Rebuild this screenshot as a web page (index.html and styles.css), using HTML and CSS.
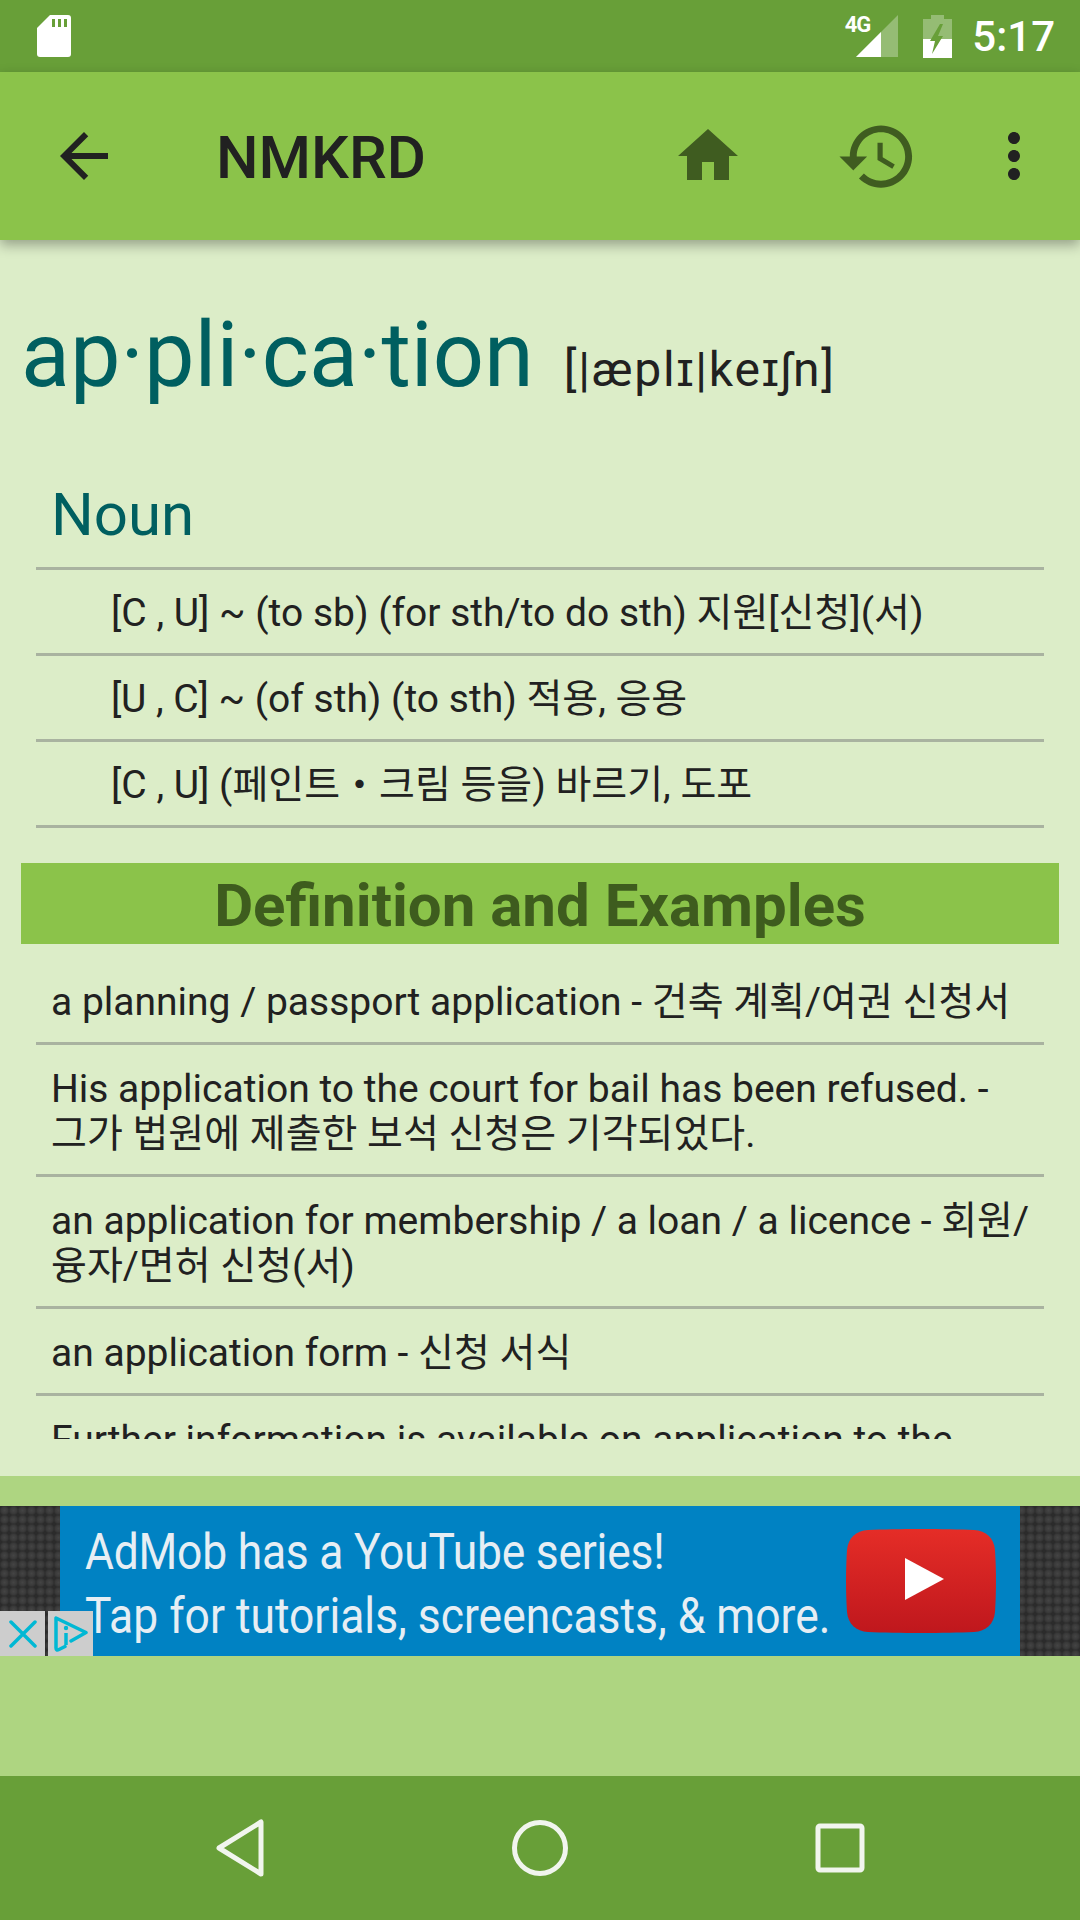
FILE: index.html
```html
<!DOCTYPE html>
<html lang="ko">
<head>
  <meta charset="UTF-8" />
  <meta name="viewport" content="width=device-width, initial-scale=1.0"/>
  <title>NMKRD</title>
  <link rel="stylesheet" href="styles.css">
</head>
<body>
  <div class="status-bar">
    <svg class="sd-icon" width="34" height="42" viewBox="0 0 34 42">
      <path fill="#fff" d="M13 0h18a3 3 0 0 1 3 3v36a3 3 0 0 1-3 3H3a3 3 0 0 1-3-3V13z"/>
      <path fill="#689f38" d="M15 4h3v8h-3zM21 4h3v8h-3zM27 4h3v8h-3z"/>
    </svg>
    <div class="status-right">
      <span class="net-label">4G</span>
      <svg class="signal-icon" width="42" height="42" viewBox="0 0 42 42">
        <path fill="#fff" fill-opacity="0.3" d="M42 0v42H0z"/>
        <path fill="#fff" d="M25 17v25H0z"/>
      </svg>
      <svg class="battery-icon" width="29" height="43" viewBox="0 0 29 43">
        <path fill="#fff" fill-opacity="0.3" d="M8 0h13v4h8v20H0V4h8z"/>
        <path fill="#fff" d="M0 24h29v19H0z"/>
        <path fill="#689f38" d="M17 9L7 26h5l-3 13 11-18h-5l5-12z"/>
      </svg>
      <span class="clock">5:17</span>
    </div>
  </div>

  <header class="toolbar">
    <svg class="icon icon-back" viewBox="0 0 24 24"><path d="M20 11H7.83l5.59-5.59L12 4l-8 8 8 8 1.41-1.41L7.83 13H20v-2z"/></svg>
    <div class="toolbar-title">NMKRD</div>
    <svg class="icon icon-home" viewBox="0 0 24 24"><path d="M10 20v-6h4v6h5v-8h3L12 3 2 12h3v8z"/></svg>
    <svg class="icon icon-history" viewBox="0 0 24 24"><path d="M13 3c-4.97 0-9 4.03-9 9H1l3.89 3.89.07.14L9 12H6c0-3.87 3.13-7 7-7s7 3.13 7 7-3.13 7-7 7c-1.93 0-3.68-.79-4.94-2.06l-1.42 1.42C8.27 19.99 10.51 21 13 21c4.97 0 9-4.03 9-9s-4.03-9-9-9zm-1 5v5l4.28 2.54.72-1.21-3.5-2.08V8H12z"/></svg>
    <svg class="icon icon-more" viewBox="0 0 24 24"><path d="M12 8c1.1 0 2-.9 2-2s-.9-2-2-2-2 .9-2 2 .9 2 2 2zm0 2c-1.1 0-2 .9-2 2s.9 2 2 2 2-.9 2-2-.9-2-2-2zm0 6c-1.1 0-2 .9-2 2s.9 2 2 2 2-.9 2-2-.9-2-2-2z"/></svg>
  </header>

  <main class="content">
    <div class="headword">
      <span class="word">ap·pli·ca·tion</span>
      <span class="phonetic">[|æplɪ|keɪʃn]</span>
    </div>

    <h2 class="pos">Noun</h2>
    <ul class="meanings">
      <li>[C , U] ~ (to sb) (for sth/to do sth) 지원[신청](서)</li>
      <li>[U , C] ~ (of sth) (to sth) 적용, 응용</li>
      <li>[C , U] (페인트・크림 등을) 바르기, 도포</li>
    </ul>

    <h2 class="section-title">Definition and Examples</h2>
    <ul class="examples">
      <li>a planning / passport application - 건축 계획/여권 신청서</li>
      <li>His application to the court for bail has been refused. -<br>그가 법원에 제출한 보석 신청은 기각되었다.</li>
      <li>an application for membership / a loan / a licence - 회원/<br>융자/면허 신청(서)</li>
      <li>an application form - 신청 서식</li>
      <li>Further information is available on application to the</li>
    </ul>
  </main>

  <section class="ad-area">
    <div class="ad">
      <div class="ad-banner">
        <div class="ad-text">
          <div class="ad-line-first">AdMob has a YouTube series!</div>
          <div>Tap for tutorials, screencasts, &amp; more.</div>
        </div>
        <svg class="yt-logo" width="150" height="104" viewBox="0 0 150 104">
          <defs>
            <linearGradient id="yt-red" x1="0" y1="0" x2="0" y2="1">
              <stop offset="0" stop-color="#e52d27"/>
              <stop offset="1" stop-color="#bf171d"/>
            </linearGradient>
          </defs>
          <path fill="url(#yt-red)" d="M22 1C50-.3 100-.3 128 1c12 .6 20 8 21 20 1.300 20 1.300 42 0 62-1 12-9 19.400-21 20-28 1.300-78 1.300-106 0-12-.6-20-8-21-20-1.300-20-1.300-42 0-62C2 9 10 1.600 22 1z"/>
          <path fill="#fff" d="M59 29l39 21-39 21z"/>
        </svg>
      </div>
      <div class="ad-badge">
        <span class="ad-close">
          <svg width="28" height="28" viewBox="0 0 28 28"><path fill="none" stroke="#00b8d4" stroke-width="3.500" stroke-linecap="round" d="M2 2l24 24M26 2L2 26"/></svg>
        </span>
        <span class="ad-info">
          <svg width="36" height="36" viewBox="0 0 36 36">
            <path fill="none" stroke="#00b8d4" stroke-width="3.500" stroke-linecap="round" stroke-linejoin="round" d="M18 25l15-8.500L3 2v30c0 2 1 2.500 3 1.500l6-3"/>
            <path fill="none" stroke="#00b8d4" stroke-width="3.500" d="M13 17v12"/>
            <circle cx="13" cy="12" r="2.200" fill="#00b8d4"/>
          </svg>
        </span>
      </div>
    </div>
  </section>

  <footer class="nav-bar">
    <svg width="48" height="58" viewBox="0 0 48 58"><path fill="none" stroke="#f1f5ee" stroke-width="5" stroke-linejoin="round" d="M45 3v52L3 29z"/></svg>
    <svg width="58" height="58" viewBox="0 0 58 58"><circle cx="29" cy="29" r="25.500" fill="none" stroke="#f1f5ee" stroke-width="5"/></svg>
    <svg width="50" height="50" viewBox="0 0 50 50"><rect x="3" y="3" width="44" height="44" rx="2" fill="none" stroke="#f1f5ee" stroke-width="5"/></svg>
  </footer>
</body>
</html>
```

FILE: styles.css
```css
* {
  box-sizing: border-box;
}

body {
  margin: 0;
  width: 1080px;
  height: 1920px;
  overflow: hidden;
  display: flex;
  flex-direction: column;
  font-family: Roboto, "Noto Sans CJK KR", sans-serif;
  background-color: #dcedc8;
  color: #212121;
}

ul {
  list-style: none;
  margin: 0;
  padding: 0;
}

/* status bar */
.status-bar {
  height: 72px;
  flex-shrink: 0;
  background-color: #689f38;
  display: flex;
  justify-content: space-between;
  padding: 15px 25px 0 37px;
  color: #fff;
}

.sd-icon {
  display: block;
}

.status-right {
  display: flex;
  align-items: flex-start;
}

.net-label {
  font-size: 22px;
  font-weight: 700;
  line-height: 22px;
  margin-right: -25px;
  letter-spacing: -1px;
  position: relative;
  top: -1px;
  left: -11px;
}

.signal-icon {
  margin-right: 25px;
}

.battery-icon {
  margin-right: 20px;
}

.clock {
  font-size: 42px;
  font-weight: 500;
  line-height: 42px;
  margin-top: 1px;
}

/* toolbar */
.toolbar {
  height: 168px;
  flex-shrink: 0;
  background-color: #8bc34a;
  display: flex;
  align-items: center;
  position: relative;
  box-shadow: 0 5px 12px rgba(0, 0, 0, 0.32);
}

.icon {
  display: block;
  flex-shrink: 0;
  width: 72px;
  height: 72px;
  fill: #212121;
}

.icon-back {
  margin-left: 48px;
}

.toolbar-title {
  margin-left: 96px;
  padding-top: 2px;
  font-size: 60px;
  font-weight: 500;
  color: #212121;
}

.icon-home {
  margin-left: auto;
  fill: #3f5c20;
}

.icon-history {
  width: 83px;
  height: 83px;
  margin-left: 92px;
  fill: #3f5c20;
}

.icon-more {
  margin-left: 59px;
  margin-right: 30px;
}

/* dictionary content */
.content {
  height: 1236px;
  flex-shrink: 0;
  padding: 0 21px;
  background-color: #dcedc8;
  overflow: hidden;
}

.headword {
  display: flex;
  align-items: baseline;
  padding-top: 63px;
  height: 215px;
  white-space: nowrap;
}

.word {
  font-size: 90px;
  color: #005f60;
  margin-right: 30px;
}

.phonetic {
  font-size: 48px;
  letter-spacing: 1.800px;
  color: #212121;
}

.pos {
  margin: 0 15px;
  padding: 3px 15px 0;
  font-size: 60px;
  font-weight: 400;
  color: #005f60;
  line-height: 113px;
  height: 115px;
  border-bottom: 3px solid #a9b3a0;
}

.meanings {
  margin: 0 15px;
}

.meanings li {
  height: 86px;
  padding: 4px 0 0 75px;
  line-height: 78px;
  font-size: 39px;
  border-bottom: 3px solid #a9b3a0;
  white-space: nowrap;
}

.section-title {
  margin: 35px 0 0;
  height: 81px;
  line-height: 86px;
  background-color: #8bc34a;
  color: #3e5c1e;
  font-size: 60px;
  font-weight: 700;
  text-align: center;
}

.examples {
  margin: 14px 15px 0;
  height: 481px;
  overflow: hidden;
}

.examples li {
  padding: 22px 0 17px 15px;
  font-size: 39px;
  line-height: 45px;
  border-bottom: 3px solid #a9b3a0;
}

.examples li:last-child {
  border-bottom: none;
}

/* ad */
.ad-area {
  height: 300px;
  flex-shrink: 0;
  background-color: #aed581;
  padding-top: 30px;
}

.ad {
  position: relative;
  height: 150px;
  padding: 0 60px;
  background-color: #333;
  background-image: radial-gradient(circle at 50% 50%, #444 0, #3a3a3a 3px, #2b2b2b 5px);
  background-size: 9px 9px;
}

.ad-banner {
  height: 150px;
  background-color: #0082c3;
  display: flex;
  align-items: center;
  padding: 0 24px 0 25px;
}

.ad-text {
  flex: 1;
  min-width: 0;
  margin-top: 5px;
  color: #e6eef4;
  font-size: 50px;
  line-height: 64px;
  transform: scaleX(0.888);
  transform-origin: left center;
  white-space: nowrap;
}

.ad-line-first {
  letter-spacing: -0.250px;
}

.yt-logo {
  flex-shrink: 0;
}

.ad-badge {
  position: absolute;
  left: 0;
  bottom: 0;
  height: 45px;
  width: 93px;
  display: flex;
  justify-content: space-between;
}

.ad-close,
.ad-info {
  display: flex;
  align-items: center;
  justify-content: center;
  width: 45px;
  height: 45px;
  background-color: #cdcdcd;
}

/* android nav */
.nav-bar {
  height: 144px;
  flex-shrink: 0;
  background-color: #689f38;
  display: flex;
  align-items: center;
  padding: 0 215px 0 216px;
  justify-content: space-between;
}
```
